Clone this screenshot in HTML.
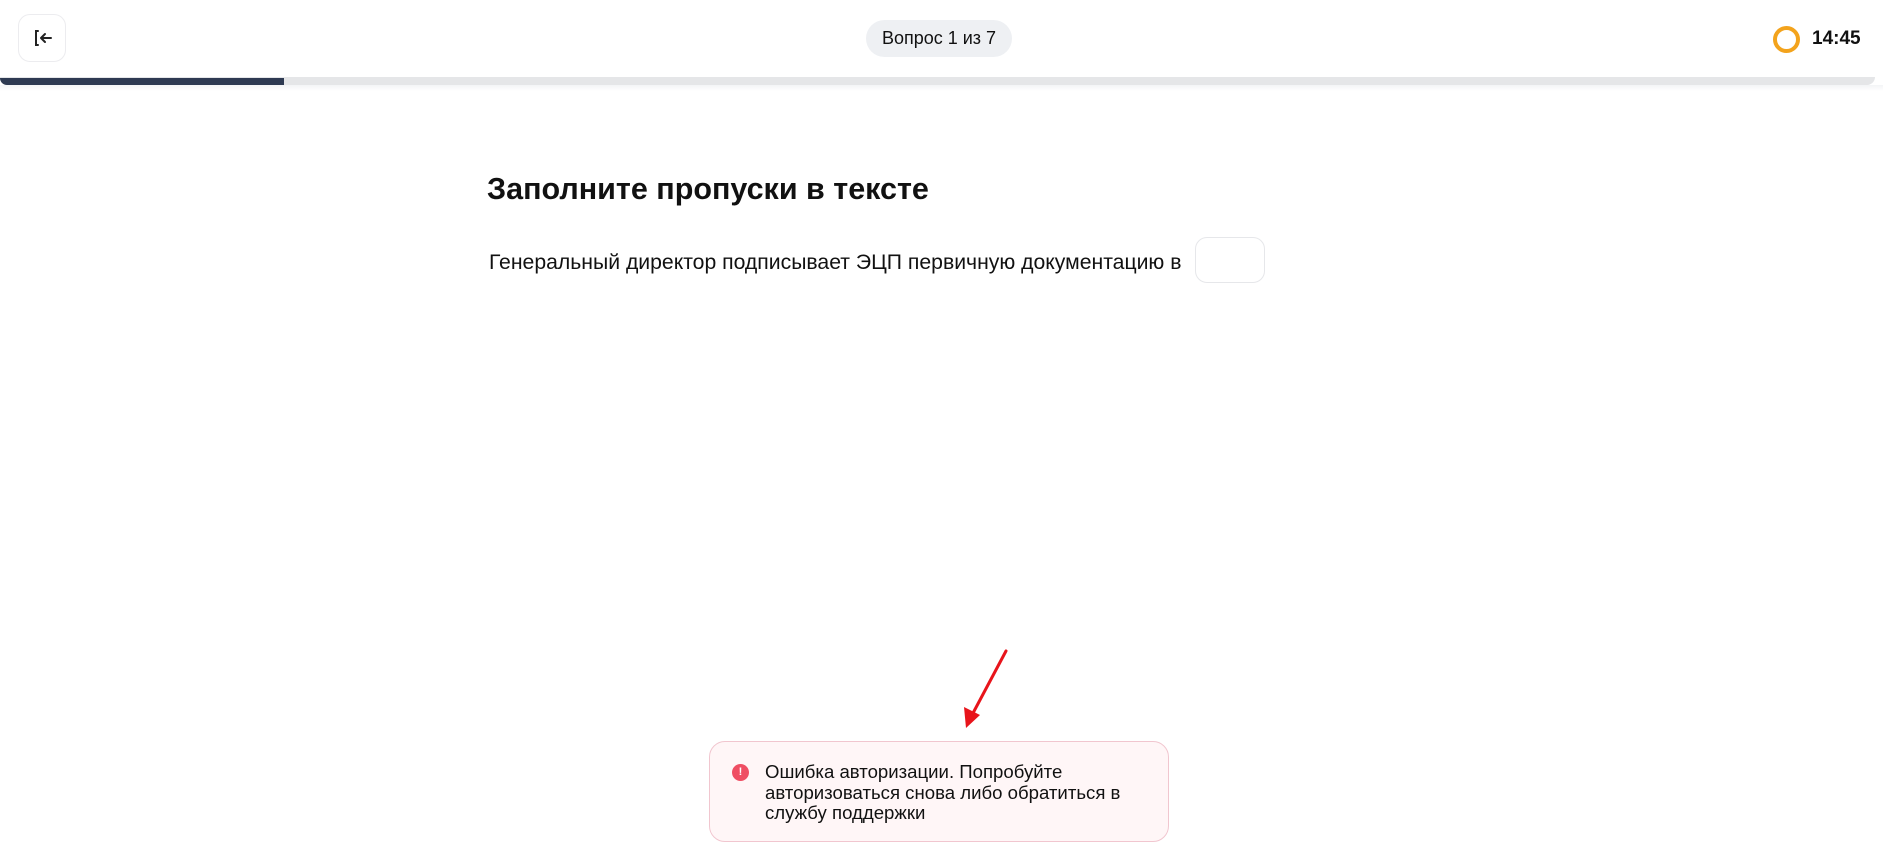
<!DOCTYPE html>
<html><head><meta charset="utf-8"><style>
html,body{margin:0;padding:0;width:1883px;height:859px;overflow:hidden;background:#fff;font-family:"Liberation Sans",sans-serif;color:#111;}
.hdr{position:absolute;left:0;top:0;width:1883px;height:78px;background:#fff;}
.back{position:absolute;left:18px;top:14px;width:48px;height:48px;border:1px solid #ececef;border-radius:12px;box-sizing:border-box;background:#fff;}
.pill{position:absolute;left:866px;top:20px;width:146px;height:37px;border-radius:19px;background:#eef0f3;font-size:18px;line-height:37px;text-align:center;color:#111;}
.timer{position:absolute;left:1773px;top:26px;width:27px;height:27px;border:4px solid #f3a31c;border-radius:50%;box-sizing:border-box;}
.time{position:absolute;left:1812px;top:28px;font-size:19px;font-weight:bold;}
.bar{position:absolute;left:0;top:77px;width:1875px;height:8px;background:#e5e6e8;border-radius:0 0 8px 8px;}
.bar i{position:absolute;left:0;top:1px;width:284px;height:7px;background:#2e3a52;border-radius:0 0 0 10px;}
.shade{position:absolute;left:0;top:85px;width:1883px;height:6px;background:linear-gradient(#f3f4f6,#fff);}
h1{position:absolute;left:487px;top:172px;margin:0;font-size:30.5px;font-weight:bold;}
.q{position:absolute;left:489px;top:251px;font-size:21.2px;}
.inp{position:absolute;left:1195px;top:237px;width:70px;height:46px;border:1px solid #e6e7ea;border-radius:12px;box-sizing:border-box;}
.toast{position:absolute;left:709px;top:741px;width:460px;height:101px;border:1px solid #f1c6cf;border-radius:16px;background:#fff6f7;box-sizing:border-box;}
.toast .ic{position:absolute;left:22px;top:22px;width:17px;height:17px;border-radius:50%;background:#ef4e63;color:#fff;font-size:11px;font-weight:bold;text-align:center;line-height:17px;}
.toast .t{position:absolute;left:55px;top:20px;width:395px;font-size:18.6px;line-height:20.5px;color:#111;}
</style></head><body>
<div class="hdr"></div>
<div class="back"><svg width="48" height="48" viewBox="0 0 48 48" style="position:absolute;left:-1px;top:-1px"><path d="M20 17h-2v14h2" fill="none" stroke="#222" stroke-width="2" stroke-linecap="round"/><path d="M33 24h-10M27 20l-4 4 4 4" fill="none" stroke="#222" stroke-width="2" stroke-linecap="round" stroke-linejoin="round"/></svg></div>
<div class="pill">Вопрос 1 из 7</div>
<div class="timer"></div>
<div class="time">14:45</div>
<div class="bar"><i></i></div>
<div class="shade"></div>
<h1>Заполните пропуски в тексте</h1>
<div class="q">Генеральный директор подписывает ЭЦП первичную документацию в</div>
<div class="inp"></div>
<svg style="position:absolute;left:0;top:0" width="1883" height="859"><line x1="1006" y1="651" x2="972" y2="715" stroke="#e8141b" stroke-width="3" stroke-linecap="round"/><polygon points="966,728 964,707 980,715" fill="#e8141b"/></svg>
<div class="toast"><div class="ic">!</div><div class="t">Ошибка авторизации. Попробуйте авторизоваться снова либо обратиться в службу поддержки</div></div>
</body></html>
